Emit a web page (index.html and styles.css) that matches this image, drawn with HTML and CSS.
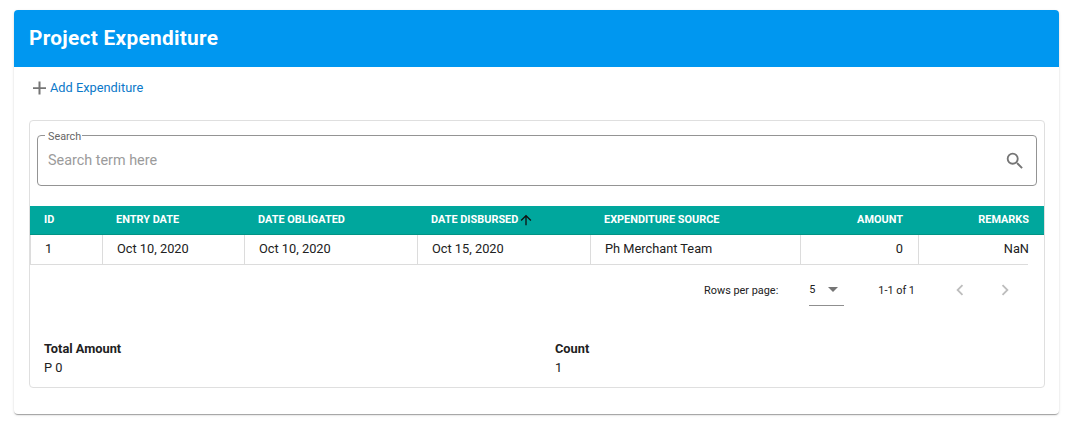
FILE: index.html
```html
<!DOCTYPE html>
<html lang="en">
<head>
<meta charset="utf-8">
<title>Project Expenditure</title>
<link rel="stylesheet" href="styles.css">
</head>
<body>
<main class="card">
  <header class="card-header"><h1>Project Expenditure</h1></header>
  <div class="card-body">
    <a class="add">
      <svg class="add-icon" viewBox="0 0 20 20"><path d="M17 11h-5.5v5.5h-2V11H4V9.300h5.500V3.500h2v5.800H17z"/></svg>
      <span>Add Expenditure</span>
    </a>
    <section class="panel">
      <fieldset class="search">
        <legend>Search</legend>
        <div class="search-row">
          <span class="placeholder">Search term here</span>
          <svg class="search-icon" viewBox="0 0 24 24"><path d="M15.5 14h-.79l-.28-.27A6.471 6.471 0 0 0 16 9.5 6.5 6.5 0 1 0 9.5 16c1.61 0 3.09-.59 4.23-1.57l.27.28v.79l5 4.99L20.49 19l-4.99-5zm-6 0C7.01 14 5 11.99 5 9.5S7.01 5 9.5 5 14 7.01 14 9.5 11.99 14 9.5 14z"/></svg>
        </div>
      </fieldset>
      <div class="row head">
        <div>ID</div><div>ENTRY DATE</div><div>DATE OBLIGATED</div>
        <div>DATE DISBURSED<svg class="sort-icon" viewBox="0 0 24 24"><path d="M4 12l1.41 1.41L11 7.83V20h2V7.83l5.58 5.59L20 12l-8-8-8 8z"/></svg></div>
        <div>EXPENDITURE SOURCE</div><div class="num">AMOUNT</div><div class="num">REMARKS</div>
      </div>
      <div class="row data">
        <div>1</div><div>Oct 10, 2020</div><div>Oct 10, 2020</div><div>Oct 15, 2020</div>
        <div>Ph Merchant Team</div><div class="num">0</div><div class="num last"><span>NaN</span></div>
      </div>
      <div class="pager">
        <span class="pager-label">Rows per page:</span>
        <span class="select">5<svg class="caret" viewBox="0 0 10 5"><path d="M0 0h10L5 5z"/></svg></span>
        <span class="range">1-1 of 1</span>
        <svg class="chevron" viewBox="0 0 24 24"><path d="M15.41 7.41L14 6l-6 6 6 6 1.41-1.41L10.83 12z"/></svg>
        <svg class="chevron" viewBox="0 0 24 24"><path d="M8.59 16.59L10 18l6-6-6-6-1.41 1.41L13.17 12z"/></svg>
      </div>
      <div class="summary">
        <div><b>Total Amount</b><br>P 0</div>
        <div><b>Count</b><br>1</div>
      </div>
    </section>
  </div>
</main>
</body>
</html>
```
FILE: styles.css
```css
* { box-sizing: border-box; }
body {
  margin: 0;
  padding: 10px 14px;
  background: #fff;
  color: #212121;
  font: 12.8px/19px Roboto, sans-serif;
}
.card {
  height: 404px;
  border-radius: 4px;
  background: #fff;
  box-shadow: 0 2px 1px -1px rgba(0,0,0,.2), 0 1px 1px rgba(0,0,0,.14), 0 1px 3px rgba(0,0,0,.12);
}
.card-header {
  display: flex;
  align-items: center;
  height: 57px;
  padding: 0 15px 2px;
  border-radius: 4px 4px 0 0;
  background: #0097f0;
  color: #fff;
}
h1 {
  margin: 0;
  font-size: 20.8px;
  font-weight: 700;
  letter-spacing: .3px;
  line-height: 24px;
}
.card-body { padding: 9px 14px 0 15px; }
.add {
  display: flex;
  align-items: center;
  gap: 1px;
  height: 24px;
  margin-bottom: 20px;
  color: #0b79c9;
}
.add span { padding-bottom: 1px; }
.add-icon { width: 20px; height: 20px; fill: #757575; }
.panel {
  height: 268px;
  border: 1px solid #dfdfdf;
  border-radius: 4px;
}
.search {
  height: 58px;
  margin: 7px 7px 20px;
  padding: 0 10px;
  border: 1px solid #949494;
  border-radius: 4px;
}
.search legend {
  margin-left: -3px;
  padding: 3px 1px 0 3px;
  color: #666;
  font-size: 10.8px;
  line-height: 12px;
}
.search-row {
  display: flex;
  align-items: center;
  justify-content: space-between;
  height: 35px;
}
.placeholder { color: #9b9b9b; font-size: 14.4px; }
.search-icon { width: 22px; height: 22px; fill: #757575; }
.row {
  display: grid;
  grid-template-columns: 72px 142px 173px 173px 210px 118px 126px;
}
.head {
  height: 29px;
  border-bottom: 1px solid #009485;
  background: #00a79d;
  color: #fff;
  font-size: 10.92px;
  font-weight: 700;
  line-height: 27px;
}
.head div { display: flex; padding: 0 15px 0 14px; }
.data {
  height: 30px;
  line-height: 28px;
}
.data div {
  padding: 0 15px 0 14px;
  border-left: 1px solid #dcdcdc;
  border-bottom: 1px solid #dcdcdc;
}
.row .num { justify-content: flex-end; text-align: right; }
.row .last { margin-right: 16px; padding-right: 0; }
.last span { margin-right: -1px; }
.sort-icon { width: 16px; height: 16px; margin-top: 6px; fill: #111; }
.pager {
  display: flex;
  align-items: center;
  height: 50px;
  padding-right: 28px;
  justify-content: flex-end;
  font-size: 10.88px;
}
.select {
  display: flex;
  align-items: center;
  justify-content: space-between;
  width: 35px;
  height: 32px;
  margin: 0 34px 0 31px;
  padding-right: 6px;
  border-bottom: 1px solid #8f8f8f;
}
.caret { width: 10px; height: 5px; fill: #757575; }
.range { margin-right: 34px; }
.chevron { width: 22px; height: 22px; fill: #bdbdbd; }
.chevron + .chevron { margin-left: 23px; }
.summary {
  display: grid;
  grid-template-columns: 511px 1fr;
  padding: 24px 14px 0;
}
```
